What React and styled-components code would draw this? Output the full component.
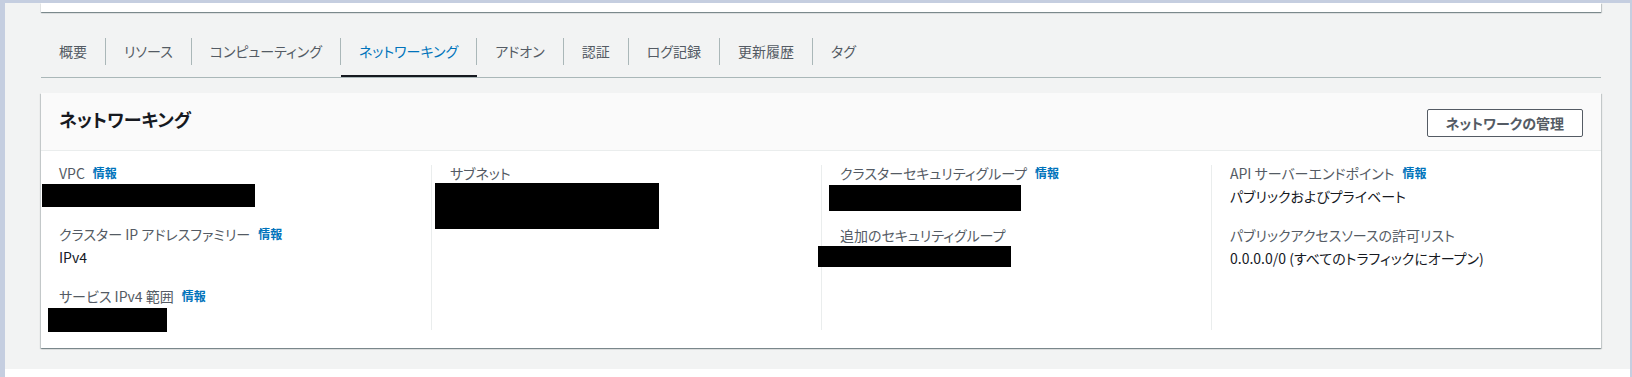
import React from 'react'
import styled, { createGlobalStyle } from 'styled-components'

const GlobalStyle = createGlobalStyle`
  html, body {
    margin: 0;
    padding: 0;
    background: #c5cee0;
  }
  body {
    font-family: "Noto Sans CJK JP", "Noto Sans", sans-serif;
    font-size: 14px;
    font-feature-settings: "palt";
    color: #16191f;
  }
  button {
    font-feature-settings: "palt";
  }
`

const Frame = styled.div`
  background: #c5cee0;
  padding: 3px 2px 0 5px;
  height: 377px;
  box-sizing: border-box;
`

const Page = styled.div`
  background: #ffffff;
  height: 374px;
`

const Main = styled.div`
  background: #f2f3f3;
  height: 366px;
  padding: 0 29px 0 36px;
  box-sizing: border-box;
`

const TopCard = styled.div`
  height: 9px;
  background: #ffffff;
  box-shadow: 0 1px 1px 0 rgba(0, 28, 36, 0.4), 1px 1px 1px 0 rgba(0, 28, 36, 0.15);
`

const TabList = styled.div`
  display: flex;
  margin-top: 15px;
  border-bottom: 1px solid #aab7b8;
`

const Tab = styled.div`
  padding: 11px 0 10px;
  border-bottom: 2px solid ${p => (p.$active ? '#16191f' : 'transparent')};
  cursor: pointer;
`

const TabLabel = styled.span`
  display: block;
  line-height: 27px;
  padding: 0 18px;
  border-right: 1px solid ${p => (p.$last ? 'transparent' : '#aab7b8')};
  color: ${p => (p.$active ? '#0073bb' : '#545b64')};
  white-space: nowrap;
`

const Panel = styled.section`
  margin-top: 15px;
  background: #ffffff;
  box-shadow: 0 1px 1px 0 rgba(0, 28, 36, 0.3), 1px 1px 1px 0 rgba(0, 28, 36, 0.15),
    -1px 1px 1px 0 rgba(0, 28, 36, 0.15);
`

const PanelHeader = styled.header`
  display: flex;
  align-items: center;
  justify-content: space-between;
  height: 57px;
  padding: 0 18px;
  background: #fafafa;
  border-bottom: 1px solid #eaeded;
`

const Heading = styled.h2`
  margin: -6px 0 0;
  font-size: 18px;
  font-weight: 700;
  line-height: 22px;
  color: #16191f;
`

const Button = styled.button`
  height: 28px;
  margin-top: 2px;
  padding: 0 18px;
  border: 1px solid #545b64;
  border-radius: 2px;
  background: #ffffff;
  color: #545b64;
  font-family: inherit;
  font-size: 14px;
  font-weight: 700;
`

const PanelBody = styled.div`
  display: grid;
  grid-template-columns: repeat(4, 1fr);
  padding: 14px 0 18px;
`

const Column = styled.div`
  padding: 0 18px;
  border-left: 1px solid ${p => (p.$first ? 'transparent' : '#eaeded')};
  ${p => (p.$first ? 'border-left: none;' : '')}
`

const Field = styled.div`
  & + & {
    margin-top: 20px;
  }
`

const Label = styled.div`
  display: flex;
  align-items: center;
  gap: 8px;
  line-height: 16px;
  color: #545b64;
  white-space: nowrap;
`

const InfoLink = styled.a`
  font-size: 12px;
  font-weight: 700;
  color: #0073bb;
  text-decoration: none;
`

const Value = styled.div`
  margin-top: 4px;
  height: 22px;
  line-height: 22px;
  color: #16191f;
  white-space: nowrap;
`

const Redacted = styled.div`
  background: #000000;
  width: ${p => p.$w}px;
  height: ${p => p.$h}px;
  margin-left: ${p => p.$dx}px;
  margin-top: ${p => p.$dy}px;
`

const tabs = ['概要', 'リソース', 'コンピューティング', 'ネットワーキング', 'アドオン', '認証', 'ログ記録', '更新履歴', 'タグ']

const columns = [
  [
    { label: 'VPC', info: true, box: { w: 213, h: 23, dx: -17, dy: -1 } },
    { label: 'クラスター IP アドレスファミリー', info: true, value: 'IPv4' },
    { label: 'サービス IPv4 範囲', info: true, box: { w: 119, h: 24, dx: -11, dy: 2 } },
  ],
  [{ label: 'サブネット', box: { w: 224, h: 46, dx: -15, dy: -2 } }],
  [
    { label: 'クラスターセキュリティグループ', info: true, box: { w: 192, h: 26, dx: -11, dy: 3 } },
    { label: '追加のセキュリティグループ', box: { w: 193, h: 21, dx: -22, dy: -1 } },
  ],
  [
    { label: 'API サーバーエンドポイント', info: true, value: 'パブリックおよびプライベート' },
    { label: 'パブリックアクセスソースの許可リスト', value: '0.0.0.0/0 (すべてのトラフィックにオープン)' },
  ],
]

const App = () => (
  <Frame>
    <GlobalStyle />
    <Page>
      <Main>
        <TopCard />
        <TabList>
          {tabs.map((t, i) => (
            <Tab key={t} $active={t === 'ネットワーキング'}>
              <TabLabel $active={t === 'ネットワーキング'} $last={i === tabs.length - 1}>
                {t}
              </TabLabel>
            </Tab>
          ))}
        </TabList>
        <Panel>
          <PanelHeader>
            <Heading>ネットワーキング</Heading>
            <Button>ネットワークの管理</Button>
          </PanelHeader>
          <PanelBody>
            {columns.map((fields, ci) => (
              <Column key={ci} $first={ci === 0}>
                {fields.map(f => (
                  <Field key={f.label}>
                    <Label>
                      {f.label}
                      {f.info && <InfoLink href="#">情報</InfoLink>}
                    </Label>
                    <Value>
                      {f.box ? <Redacted $w={f.box.w} $h={f.box.h} $dx={f.box.dx} $dy={f.box.dy} /> : f.value}
                    </Value>
                  </Field>
                ))}
              </Column>
            ))}
          </PanelBody>
        </Panel>
      </Main>
    </Page>
  </Frame>
)

export default App
